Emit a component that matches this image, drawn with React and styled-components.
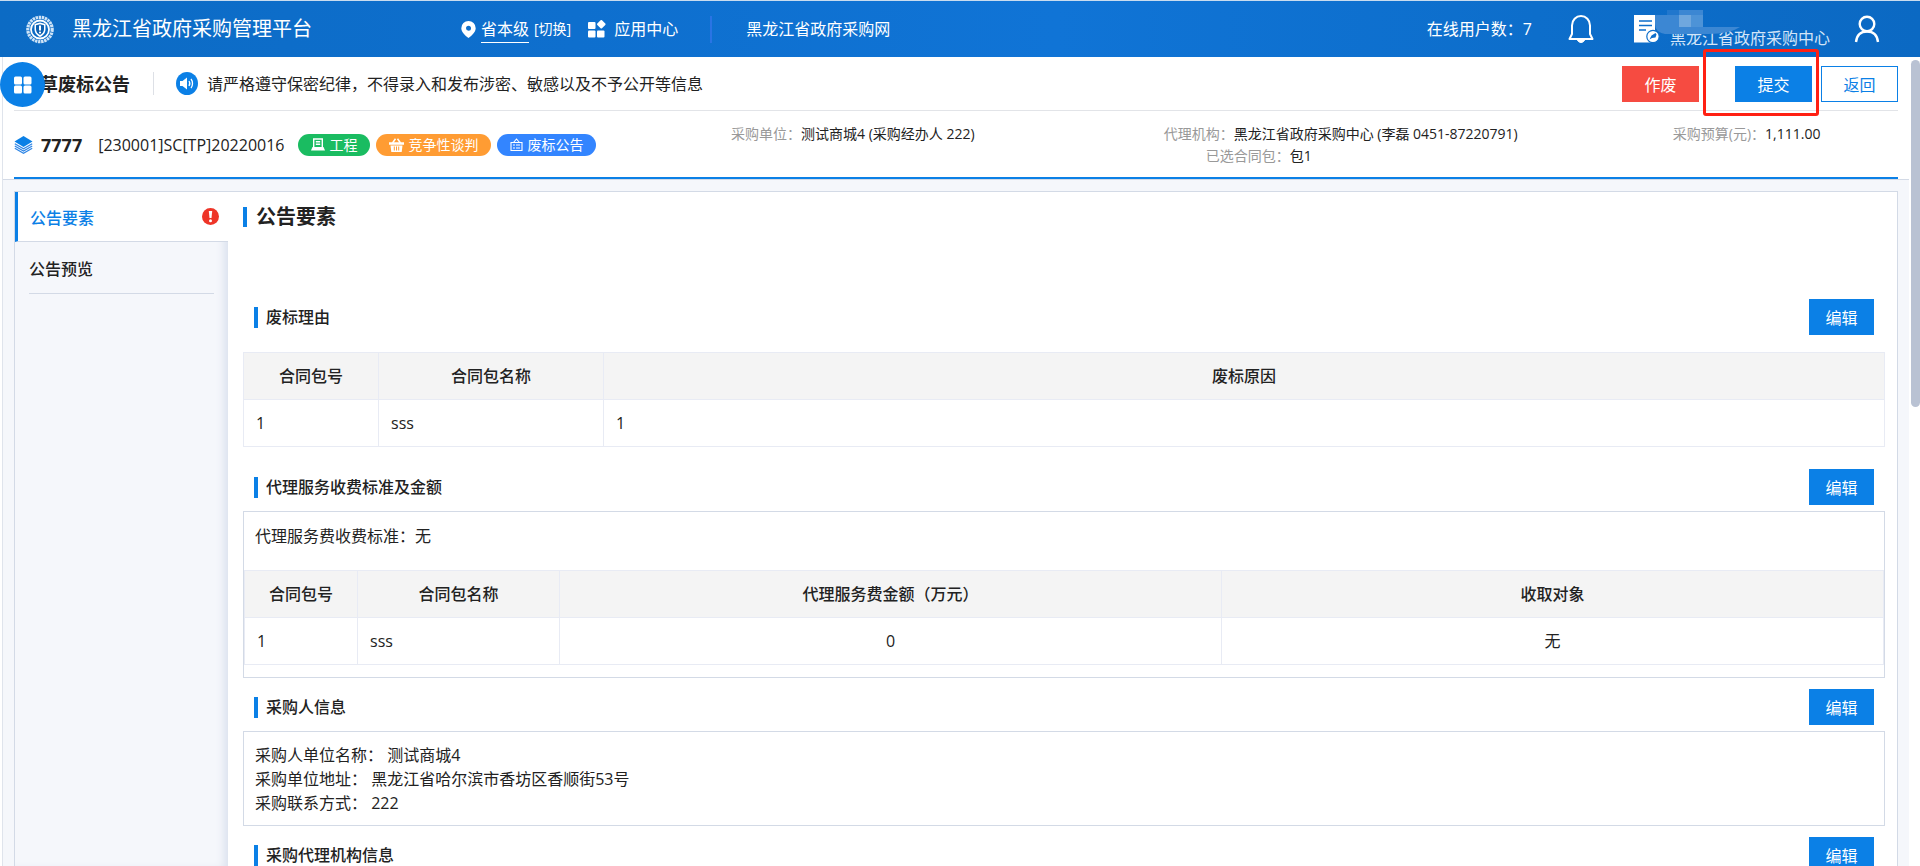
import React from "react";
import styled, { createGlobalStyle, css } from "styled-components";

const GlobalStyle = createGlobalStyle`
  * {
    box-sizing: border-box;
  }
  body {
    margin: 0;
    color: #222;
    background: #fff;
    font-family: "Open Sans", "Noto Sans CJK SC", sans-serif;
    font-size: 16px;
    line-height: 24px;
  }
  h1, h2, h3, p {
    margin: 0;
  }
  button {
    font-family: inherit;
    cursor: pointer;
  }
  a {
    color: inherit;
    text-decoration: none;
  }
`;

const Page = styled.div`
  display: flex;
  flex-direction: column;
  height: 100vh;
  overflow: hidden;
`;

const TopBar = styled.header`
  flex: none;
  display: flex;
  align-items: center;
  height: 57px;
  padding: 0 40px 0 26px;
  border-top: 1px solid #c9dcef;
  color: #fff;
  background: linear-gradient(90deg, #0c6bc4 0%, #0e6fce 30%, #1074d6 55%, #0d6ecb 80%, #0b69c3 100%);
  white-space: nowrap;
`;
const Brand = styled.a`
  display: flex;
  align-items: center;
  gap: 18px;
  width: 435px;
  font-size: 20px;
`;
const Location = styled.div`
  display: flex;
  align-items: center;
  gap: 5px;
  margin-right: 17px;
`;
const LocationName = styled.span`
  border-bottom: 1px solid #fff;
  line-height: 26px;
`;
const SwitchLink = styled.a`
  font-size: 14px;
`;
const AppCenter = styled.a`
  display: flex;
  align-items: center;
  gap: 8px;
`;
const NavDivider = styled.span`
  width: 2px;
  height: 27px;
  margin: 0 34px 0 32px;
  background: #2a74e4;
`;
const TopRight = styled.div`
  display: flex;
  align-items: center;
  margin-left: auto;
`;
const Bell = styled.svg`
  margin: 0 40px 0 36px;
`;
const Account = styled.a`
  display: flex;
  align-items: flex-start;
  position: relative;
  height: 28px;
  margin-right: 24px;
`;
const AccountName = styled.span`
  padding: 11px 0 0 10px;
  color: #d3e5f8;
`;
const Mosaic = styled.svg`
  position: absolute;
  left: 21px;
  top: -5px;
`;

const Body = styled.div`
  flex: 1;
  display: flex;
  min-height: 0;
  padding-left: 2px;
`;
const Main = styled.main`
  flex: 1;
  display: flex;
  flex-direction: column;
  min-width: 0;
  border-left: 1px solid #dfe4ec;
  background: #f5f7fb;
`;
const ScrollTrack = styled.div`
  flex: none;
  width: 11px;
  padding: 3px 0 0 2px;
`;
const ScrollThumb = styled.div`
  height: 43%;
  border-radius: 5px;
  background: #b9c2d3;
`;

const ProjectHead = styled.section`
  flex: none;
  padding: 0 11px;
  border-bottom: 1px solid #d3dae6;
  background: #fff;
`;
const TitleRow = styled.div`
  display: flex;
  align-items: center;
  height: 54px;
  border-bottom: 1px solid #e2e4e8;
`;
const FloatMenu = styled.button`
  position: absolute;
  left: 0;
  top: 62px;
  display: flex;
  align-items: center;
  justify-content: center;
  width: 45px;
  height: 45px;
  padding: 0;
  border: 0;
  border-radius: 50%;
  background: #0b80e6;
`;
const PageTitle = styled.h1`
  padding-left: 26px;
  font-size: 18px;
  font-weight: 700;
`;
const NoticeBar = styled.div`
  display: flex;
  align-items: center;
  gap: 9px;
  margin-left: 23px;
`;
const NoticeDivider = styled.span`
  width: 1px;
  height: 23px;
  margin-right: 13px;
  background: #dde0e6;
`;
const Actions = styled.div`
  display: flex;
  gap: 9px;
  margin-left: auto;
`;
const Button = styled.button`
  width: ${({ $small }) => ($small ? 65 : 77)}px;
  height: 36px;
  padding: 0;
  border: 1px solid #0b80e6;
  color: #fff;
  background: #0b80e6;
  font-size: 16px;
  ${({ $kind }) =>
    $kind === "danger" &&
    css`
      border-color: #f64b41;
      background: #f64b41;
    `}
  ${({ $kind }) =>
    $kind === "plain" &&
    css`
      color: #0b80e6;
      background: #fff;
    `}
`;
const Highlighted = styled.div`
  position: relative;
  margin-left: 27px;
  &::after {
    content: "";
    position: absolute;
    top: -17px;
    right: -7px;
    bottom: -14px;
    left: -32px;
    border: 3px solid #ff2013;
    border-radius: 3px;
    pointer-events: none;
  }
`;

const ProjectRow = styled.div`
  display: flex;
  height: 68px;
  border-bottom: 2px solid #0b80e6;
`;
const Project = styled.div`
  display: flex;
  align-items: center;
  flex: none;
  padding-top: 1px;
`;
const ProjectName = styled.strong`
  margin: 0 16px 0 8px;
  font-size: 18px;
`;
const Tags = styled.div`
  display: flex;
  gap: 6px;
  margin-left: 14px;
`;
const Tag = styled.span`
  display: flex;
  align-items: center;
  gap: 4px;
  height: 22px;
  padding: 0 13px;
  border-radius: 11px;
  color: #fff;
  background: ${({ $color }) => $color};
  font-size: 14px;
`;
const Facts = styled.div`
  flex: 1;
  margin-left: 23px;
  padding-top: 12px;
`;
const FactRow = styled.div`
  display: flex;
  justify-content: space-around;
`;
const Fact = styled.div`
  padding: 0 ${({ $wide }) => ($wide ? 34 : 0)}px;
  font-size: 14px;
  line-height: 22px;
`;
const FactLabel = styled.span`
  color: #999;
`;

const Panel = styled.div`
  flex: 1;
  display: flex;
  min-height: 0;
  margin: 11px 11px 0;
  border: 1px solid #d3dae6;
  border-bottom: 0;
  background: #fff;
  overflow: hidden;
`;
const SideNav = styled.nav`
  flex: none;
  width: 213px;
  background: #f5f7fb;
  box-shadow: inset -8px 0 8px -4px #dbe1ee;
`;
const SideLink = styled.a`
  display: flex;
  align-items: center;
  justify-content: space-between;
  height: 52px;
  margin: 0 14px;
  padding-top: 2px;
  border-bottom: 1px solid #d3dae6;
  font-weight: 500;
  ${({ $active }) =>
    $active &&
    css`
      height: 50px;
      margin: 0;
      padding: 3px 9px 0 12px;
      border-left: 3px solid #0b80e6;
      color: #0b80e6;
      background: #fff;
    `}
`;
const Content = styled.div`
  flex: 1;
  min-width: 0;
  padding: 13px 12px 0 15px;
`;
const Heading = styled.h2`
  display: flex;
  align-items: center;
  gap: 9px;
  height: 24px;
  margin-bottom: 70px;
  font-size: 20px;
  &::before {
    content: "";
    width: 4px;
    height: 20px;
    background: #0b80e6;
  }
`;
const SectionHead = styled.div`
  display: flex;
  align-items: center;
  justify-content: space-between;
  margin-bottom: ${({ $roomy }) => ($roomy ? 17 : 6)}px;
  padding: 0 11px;
`;
const SectionTitle = styled.h3`
  display: flex;
  align-items: center;
  gap: 8px;
  font-size: 16px;
  font-weight: 500;
  &::before {
    content: "";
    width: 4px;
    height: 21px;
    background: #0b80e6;
  }
`;
const Table = styled.table`
  width: 100%;
  table-layout: fixed;
  border-collapse: collapse;
  th,
  td {
    height: 47px;
    padding: 0 12px;
    border: 1px solid #e8ebf4;
    text-align: left;
  }
  th {
    background: #f4f4f4;
    font-weight: 500;
    text-align: center;
  }
`;
const TableBlock = styled.div`
  margin-bottom: 22px;
`;
const CenterCell = styled.td`
  && {
    text-align: center;
  }
`;
const Box = styled.div`
  margin-bottom: 11px;
  padding: ${({ $flush }) => ($flush ? "12px 0" : "11px 11px 10px")};
  border: 1px solid #d3dae6;
`;
const FeeNote = styled.p`
  padding: 0 11px 22px;
`;
const InfoLine = styled.p`
  line-height: 24px;
  white-space: pre;
`;

const Logo = () => (
  <svg width="28" height="29" viewBox="0 0 28 28">
    <circle cx="14" cy="14" r="12.2" fill="none" stroke="#cfe4f7" strokeWidth="3.2" strokeDasharray="2.4 0.7" />
    <circle cx="14" cy="14" r="9" fill="#0c6bc4" stroke="#fff" strokeWidth="1.8" />
    <path d="M14 7l5.500 1.500v5c0 4-2.500 6.500-5.500 8-3-1.500-5.500-4-5.500-8v-5z" fill="#fff" />
    <path d="M14 8.800l4 1v3.700c0 3-1.700 4.800-4 6-2.300-1.200-4-3-4-6V9.800z" fill="#0c5fb0" />
    <path d="M14 10v5" stroke="#fff" strokeWidth="2" />
    <circle cx="14" cy="17" r="1.100" fill="#fff" />
  </svg>
);

const PinIcon = () => (
  <svg width="15" height="17" viewBox="0 0 15 17">
    <path
      fillRule="evenodd"
      fill="#fff"
      d="M7.500 0A7.200 7.200 0 0 0 .3 7.200c0 3.600 3.700 7.200 7.200 9.800 3.500-2.600 7.200-6.200 7.200-9.800A7.200 7.200 0 0 0 7.500 0zm0 4.700a2.500 2.500 0 1 1 0 5 2.500 2.500 0 0 1 0-5z"
    />
  </svg>
);

const AppsIcon = () => (
  <svg width="18" height="18" viewBox="0 0 18 18" fill="#fff">
    <rect x="0" y="2" width="7.500" height="7" rx="1" />
    <rect x="0" y="10.500" width="7.500" height="7" rx="1" />
    <rect x="9" y="10.500" width="7.500" height="7" rx="1" />
    <rect x="10" y="1" width="6.600" height="6.600" rx="1" transform="rotate(45 13.300 4.300)" />
  </svg>
);

const BellIcon = () => (
  <Bell width="26" height="30" viewBox="0 0 26 30" fill="none" stroke="#fff" strokeWidth="2">
    <path d="M1.500 25L4 20v-8.500a9 9.500 0 0 1 18 0V20l2.500 5z" strokeLinejoin="round" />
    <path d="M9.500 26c1 3.300 6 3.300 7 0z" fill="#fff" strokeWidth="1" />
  </Bell>
);

const DocIcon = () => (
  <svg width="26" height="28" viewBox="0 0 26 28">
    <path d="M0 0h21v27.500H0z" fill="#fff" />
    <path d="M5 6h13M5 10.500h13M5 15h7" stroke="#0d6ecb" strokeWidth="1.500" />
    <circle cx="19" cy="21.500" r="6.200" fill="#fff" stroke="#0d6ecb" strokeWidth="1.200" />
    <path d="M15.500 24.500l2-4 4-2.500 1 1.500-1 3-3.500.5z" fill="#0d6ecb" />
  </svg>
);

const UserIcon = () => (
  <svg width="26" height="28" viewBox="0 0 26 28" fill="none" stroke="#fff" strokeWidth="2.400">
    <circle cx="13" cy="9" r="7.300" />
    <path d="M2 27c.8-7 5-10.500 11-10.500S23.200 20 24 27" />
  </svg>
);

const MenuIcon = () => (
  <svg width="18" height="18" viewBox="0 0 18 18" fill="#fff">
    <rect x="0" y="0.500" width="8" height="8" rx="1.500" />
    <rect x="9.500" y="0.500" width="8" height="8" rx="1.500" />
    <rect x="0" y="9.500" width="8" height="8" rx="1.500" />
    <rect x="9.500" y="9.500" width="8" height="8" rx="1.500" />
  </svg>
);

const SpeakerIcon = () => (
  <svg width="22" height="23" viewBox="0 0 22 23" fill="none">
    <ellipse cx="11" cy="11.500" rx="11" ry="11.500" fill="#0b80e6" />
    <path d="M4 9h2.500L11 5.500v12L6.500 14H4z" fill="#fff" />
    <path d="M13 9c1 1.500 1 3.500 0 5M15 7c2 2.500 2 6.500 0 9" stroke="#fff" strokeWidth="1.300" />
  </svg>
);

const LayersIcon = () => (
  <svg width="19" height="18" viewBox="0 0 19 18" fill="none" stroke="#2f86e6" strokeWidth="1.200">
    <path d="M9.500 0L18.500 5.500l-9 5.500-9-5.500z" fill="#0b80e6" stroke="none" />
    <path d="M.8 7.800l8.700 5 8.700-5M.8 10l8.700 5 8.700-5M.8 12.200l8.700 5 8.700-5" />
  </svg>
);

const ProjectIcon = () => (
  <svg width="14" height="13" viewBox="0 0 14 13" fill="none" stroke="#fff" strokeWidth="1.400">
    <path d="M2.700 9.500V1h8.600v8.500M4.800 3.700h4.400M4.800 6.300h4.400" />
    <path d="M1.500 9h11l1.500 3.500H0z" fill="#fff" stroke="none" />
  </svg>
);

const BasketIcon = () => (
  <svg width="15" height="14" viewBox="0 0 15 14">
    <path d="M3.500 5L6.500.8M11.500 5L8.500.8" fill="none" stroke="#fff" strokeWidth="1.500" />
    <path d="M0 4.200h15v2.600H0zM1.500 7.500h12L12.700 14H2.300z" fill="#fff" />
    <path d="M5.300 8.500v4M7.500 8.500v4M9.700 8.500v4" stroke="#ff9c33" />
  </svg>
);

const NoticeIcon = () => (
  <svg width="13" height="13" viewBox="0 0 13 13" fill="none" stroke="#fff" strokeWidth="1.100">
    <path d="M1 4.500h11v8H1zM3.500 4.500l3-3.500 3 3.500M3 7h2M6 7h4M3 10h2M6 10h4" />
  </svg>
);

const AlertIcon = () => (
  <svg width="17" height="21" viewBox="0 0 17 21">
    <circle cx="8.500" cy="8.500" r="8.500" fill="#ee3528" />
    <path d="M6.800 3h3.400l-.7 7h-2z" fill="#fff" />
    <circle cx="8.500" cy="12.700" r="1.500" fill="#fff" />
  </svg>
);

const Section = ({ title, roomy, children }) => (
  <section>
    <SectionHead $roomy={roomy}>
      <SectionTitle>{title}</SectionTitle>
      <Button type="button" $small>
        编辑
      </Button>
    </SectionHead>
    {children}
  </section>
);

const purchaser = [
  "采购人单位名称： 测试商城4",
  "采购单位地址： 黑龙江省哈尔滨市香坊区香顺街53号",
  "采购联系方式： 222",
];

const App = () => (
  <Page>
    <GlobalStyle />
    <TopBar>
      <Brand href="#">
        <Logo />
        黑龙江省政府采购管理平台
      </Brand>
      <Location>
        <PinIcon />
        <LocationName>省本级</LocationName>
        <SwitchLink href="#">[切换]</SwitchLink>
      </Location>
      <AppCenter href="#">
        <AppsIcon />
        应用中心
      </AppCenter>
      <NavDivider />
      <a href="#">黑龙江省政府采购网</a>
      <TopRight>
        <span>在线用户数：7</span>
        <BellIcon />
        <Account href="#">
          <DocIcon />
          <AccountName>黑龙江省政府采购中心</AccountName>
          <Mosaic width="86" height="25" viewBox="0 0 86 25">
            <path d="M0 5h12V0h36v17h37q-10 7-32 7H10Q0 22 0 14z" fill="#3c87d3" />
            <path d="M24 5h12v12H24z" fill="#6fa7de" />
            <path d="M36 5h12v12H36z" fill="#4d93d7" />
            <path d="M12 0h12v5H12z" fill="#2177cd" />
          </Mosaic>
        </Account>
        <UserIcon />
      </TopRight>
    </TopBar>
    <Body>
      <Main>
        <ProjectHead>
          <TitleRow>
            <PageTitle>草废标公告</PageTitle>
            <NoticeBar>
              <NoticeDivider />
              <SpeakerIcon />
              <span>请严格遵守保密纪律，不得录入和发布涉密、敏感以及不予公开等信息</span>
            </NoticeBar>
            <Actions>
              <Button type="button" $kind="danger">
                作废
              </Button>
              <Highlighted>
                <Button type="button">提交</Button>
              </Highlighted>
              <Button type="button" $kind="plain">
                返回
              </Button>
            </Actions>
          </TitleRow>
          <ProjectRow>
            <Project>
              <LayersIcon />
              <ProjectName>7777</ProjectName>
              <span>[230001]SC[TP]20220016</span>
              <Tags>
                <Tag $color="#1abc61">
                  <ProjectIcon />
                  工程
                </Tag>
                <Tag $color="#ff9c33">
                  <BasketIcon />
                  竞争性谈判
                </Tag>
                <Tag $color="#3385ff">
                  <NoticeIcon />
                  废标公告
                </Tag>
              </Tags>
            </Project>
            <Facts>
              <FactRow>
                <Fact $wide>
                  <FactLabel>采购单位：</FactLabel>测试商城4 (采购经办人 222)
                </Fact>
                <Fact>
                  <FactLabel>代理机构：</FactLabel>黑龙江省政府采购中心 (李磊 0451-87220791)
                </Fact>
                <Fact>
                  <FactLabel>采购预算(元)：</FactLabel>1,111.00
                </Fact>
              </FactRow>
              <FactRow>
                <Fact>
                  <FactLabel>已选合同包：</FactLabel>包1
                </Fact>
              </FactRow>
            </Facts>
          </ProjectRow>
        </ProjectHead>
        <Panel>
          <SideNav>
            <SideLink href="#" $active>
              公告要素
              <AlertIcon />
            </SideLink>
            <SideLink href="#">公告预览</SideLink>
          </SideNav>
          <Content>
            <Heading>公告要素</Heading>
            <Section title="废标理由" roomy>
              <TableBlock>
                <Table>
                  <colgroup>
                    <col width="135" />
                    <col width="225" />
                    <col />
                  </colgroup>
                  <thead>
                    <tr>
                      <th>合同包号</th>
                      <th>合同包名称</th>
                      <th>废标原因</th>
                    </tr>
                  </thead>
                  <tbody>
                    <tr>
                      <td>1</td>
                      <td>sss</td>
                      <td>1</td>
                    </tr>
                  </tbody>
                </Table>
              </TableBlock>
            </Section>
            <Section title="代理服务收费标准及金额">
              <Box $flush>
                <FeeNote>代理服务费收费标准：无</FeeNote>
                <Table>
                  <colgroup>
                    <col width="113" />
                    <col width="202" />
                    <col />
                    <col />
                  </colgroup>
                  <thead>
                    <tr>
                      <th>合同包号</th>
                      <th>合同包名称</th>
                      <th>代理服务费金额（万元）</th>
                      <th>收取对象</th>
                    </tr>
                  </thead>
                  <tbody>
                    <tr>
                      <td>1</td>
                      <td>sss</td>
                      <CenterCell>0</CenterCell>
                      <CenterCell>无</CenterCell>
                    </tr>
                  </tbody>
                </Table>
              </Box>
            </Section>
            <Section title="采购人信息">
              <Box>
                {purchaser.map((line) => (
                  <InfoLine key={line}>{line}</InfoLine>
                ))}
              </Box>
            </Section>
            <Section title="采购代理机构信息" />
          </Content>
        </Panel>
      </Main>
      <ScrollTrack>
        <ScrollThumb />
      </ScrollTrack>
    </Body>
    <FloatMenu type="button" aria-label="菜单">
      <MenuIcon />
    </FloatMenu>
  </Page>
);

export default App;
